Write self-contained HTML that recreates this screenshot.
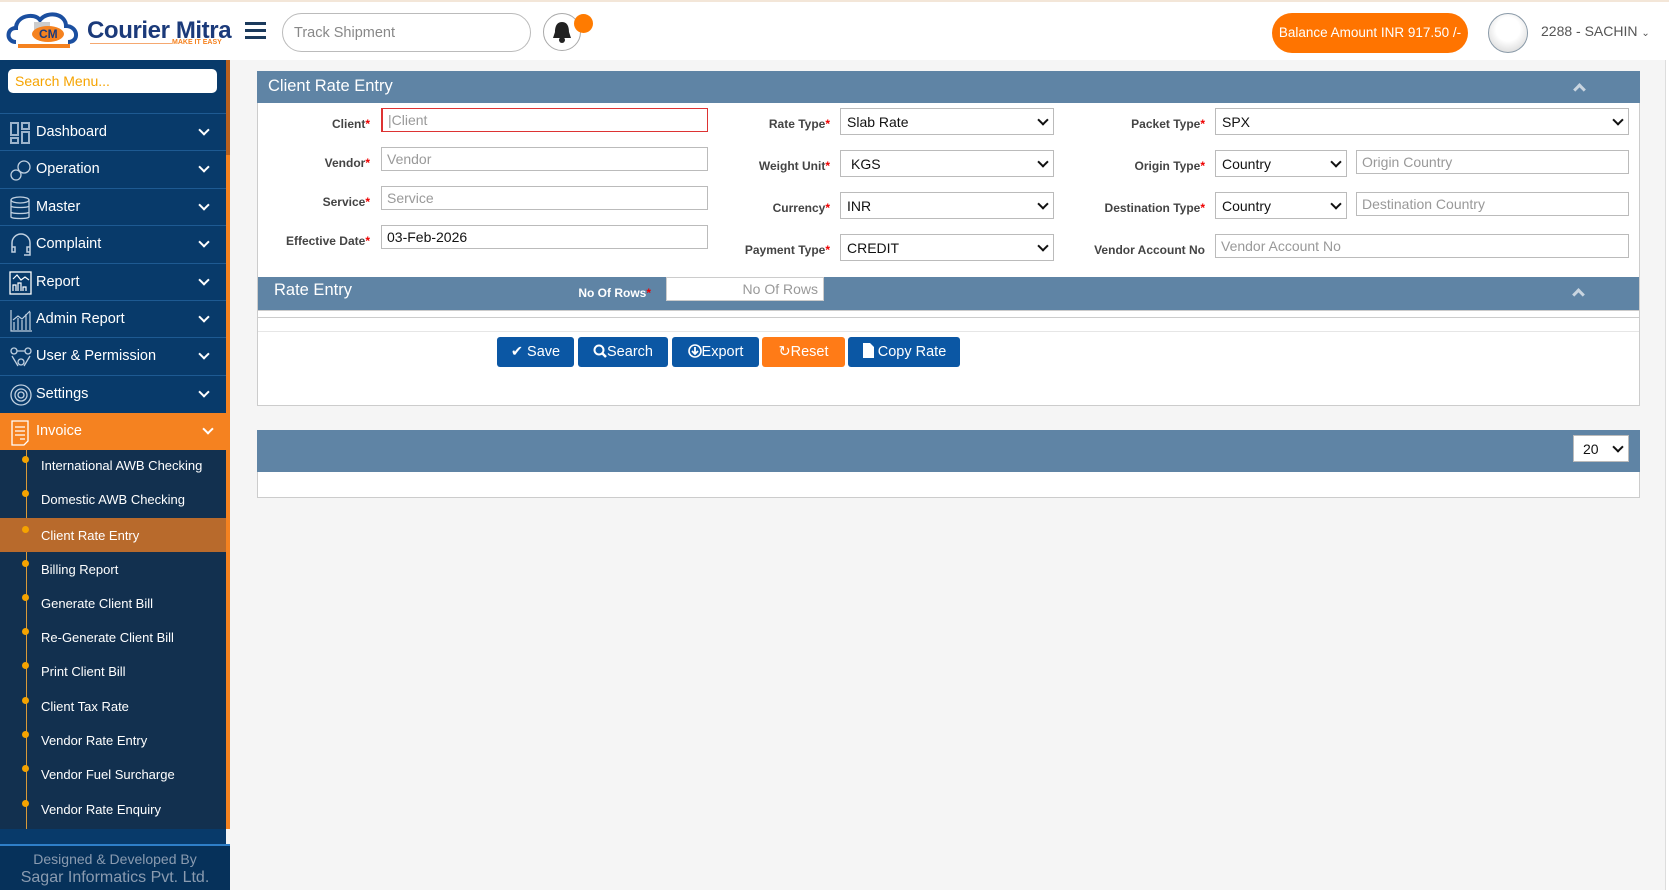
<!DOCTYPE html>
<html><head><meta charset="utf-8"><style>
*{box-sizing:border-box;margin:0;padding:0}
body{width:1669px;height:890px;overflow:hidden;background:#f5f5f5;font-family:"Liberation Sans",Arial,sans-serif;position:relative}
.a{position:absolute}
#hdr{left:0;top:0;width:1669px;height:60px;background:#fff;border-top:2px solid #f3e6d8}
#sb{left:0;top:60px;width:226px;height:830px;background:#083a6a}
.mi{position:absolute;left:0;width:226px;height:37px;border-top:1px solid #1e5a92;color:#fff;font-size:14.5px}
.mi span{position:absolute;left:36px;top:10px}
.mi i{position:absolute;right:18px;top:12px;width:8px;height:8px;border-right:2.5px solid #fff;border-bottom:2.5px solid #fff;transform:rotate(45deg)}
.mi svg{position:absolute;left:9px;top:7px}
.si{position:absolute;left:0;width:226px;height:34px;color:#fff;font-size:13px}
.si span{position:absolute;left:41px;top:10px}
.si b{position:absolute;left:22px;top:8px;width:7px;height:7px;border-radius:50%;background:#f5a300}
.lbl{position:absolute;font-size:12px;font-weight:bold;color:#444;text-align:right}
.lbl em{color:#e00;font-style:normal}
.in{position:absolute;height:24px;border:1px solid #bbb;background:#fff;font-size:14px;color:#999;padding:3px 5px;white-space:nowrap;overflow:hidden}
.sel{position:absolute;height:27px;border:1px solid #bbb;background:#fff;font-size:14px;color:#111;padding:5px 6px}
.sel:after{content:"";position:absolute;right:6px;top:7px;width:6px;height:6px;border-right:2px solid #111;border-bottom:2px solid #111;transform:rotate(45deg)}
.btn{position:absolute;top:337px;height:30px;border-radius:3px;background:#0b57a4;color:#fff;font-size:14.5px;text-align:center;line-height:30px}
.chev{position:absolute;width:9px;height:9px;border-left:3px solid #c9d5e0;border-top:3px solid #c9d5e0;transform:rotate(45deg)}
</style></head><body>
<div id="hdr" class="a">
 <svg class="a" style="left:4px;top:6px" width="84" height="46" viewBox="0 0 84 46"><path d="M12 34 C2 34 2 20 12 20 C12 8 30 4 36 12 C44 2 62 6 62 18 C74 18 76 34 64 34" fill="none" stroke="#1b4fa0" stroke-width="4"/><path d="M14 38 L66 38" stroke="#f5821f" stroke-width="4"/><rect x="30" y="14" width="16" height="14" fill="#ccc"/><ellipse cx="44" cy="26" rx="16" ry="8" fill="#f5821f"/><text x="35" y="30" font-family="Liberation Sans" font-weight="bold" font-size="12" fill="#1b3a7a">CM</text></svg>
 <div class="a" style="left:87px;top:15px;font-size:24px;font-weight:bold;color:#1b3a7a;letter-spacing:-0.4px">Courier Mitra</div>
 <div class="a" style="left:90px;top:41px;width:82px;height:1px;background:#f5a870"></div>
 <div class="a" style="left:172px;top:37px;font-size:7px;font-weight:bold;color:#f5821f">MAKE IT EASY</div>
 <div class="a" style="left:245px;top:20px;width:21px;height:3px;background:#1b3a5c;box-shadow:0 7px 0 #1b3a5c,0 14px 0 #1b3a5c"></div>
 <div class="a" style="left:282px;top:11px;width:249px;height:39px;border:1px solid #bbb;border-radius:20px;font-size:14.5px;color:#888;padding:11px 11px">Track Shipment</div>
 <div class="a" style="left:543px;top:11px;width:38px;height:38px;border:1px solid #aaa;border-radius:50%"></div>
 <svg class="a" style="left:551px;top:18px" width="22" height="24" viewBox="0 0 22 24"><path d="M11 2 C5 2 4 8 4 12 L2 18 L20 18 L18 12 C18 8 17 2 11 2Z" fill="#222"/><circle cx="11" cy="20" r="3" fill="#222"/></svg>
 <div class="a" style="left:574px;top:12px;width:19px;height:19px;border-radius:50%;background:#ff7b00"></div>
 <div class="a" style="left:1272px;top:11px;width:196px;height:40px;border-radius:20px;background:#ff7400;color:#fff;font-size:13.5px;text-align:center;line-height:40px">Balance Amount INR 917.50 /-</div>
 <div class="a" style="left:1488px;top:11px;width:40px;height:40px;border-radius:50%;border:1px solid #8a9aa8;background:radial-gradient(circle at 50% 40%,#fff 40%,#ddd 80%)"></div>
 <div class="a" style="left:1541px;top:21px;font-size:14px;color:#555">2288 - SACHIN <span style="font-size:10px">&#8964;</span></div>
</div>
<div class="a" style="left:1665px;top:60px;width:1px;height:830px;background:#ddd"></div>
<div class="a" style="left:1666px;top:60px;width:3px;height:830px;background:#fff"></div>

<div id="sb" class="a">
 <div class="a" style="left:8px;top:9px;width:209px;height:24px;background:#fff;border-radius:5px;font-size:14px;color:#f5a300;padding:4px 7px">Search Menu...</div>
 <div class="mi" style="top:53px"><svg width="22" height="24"><g fill="none" stroke="#9db4cc" stroke-width="2"><rect x="2" y="2" width="7" height="12"/><rect x="13" y="2" width="7" height="6"/><rect x="2" y="17" width="7" height="5"/><rect x="13" y="11" width="7" height="11"/></g></svg><span>Dashboard</span><i></i></div>
 <div class="mi" style="top:90px"><svg width="24" height="24"><g fill="none" stroke="#c0d0e0" stroke-width="1.3"><circle cx="15" cy="9" r="6"/><circle cx="7" cy="17" r="5"/></g></svg><span>Operation</span><i></i></div>
 <div class="mi" style="top:128px"><svg width="22" height="24"><g fill="none" stroke="#c0d0e0" stroke-width="1.3"><ellipse cx="11" cy="4" rx="9" ry="3"/><path d="M2 4v17c0 2 18 2 18 0V4M2 10c0 2 18 2 18 0M2 16c0 2 18 2 18 0"/></g></svg><span>Master</span><i></i></div>
 <div class="mi" style="top:165px"><svg width="24" height="24"><path d="M3 16V10a9 9 0 0 1 18 0v6M3 14h3v5H3zM18 14h3v5h-3zM21 19v3h-6" fill="none" stroke="#c0d0e0" stroke-width="1.5"/></svg><span>Complaint</span><i></i></div>
 <div class="mi" style="top:203px"><svg width="24" height="24"><rect x="1" y="1" width="21" height="22" fill="none" stroke="#fff" stroke-width="1.3"/><path d="M4 8l4-4 4 5 4-3 4 3M4 20v-6h3v6M9 20v-8h3v8M14 20v-4h3v4" fill="none" stroke="#fff" stroke-width="1.2"/></svg><span>Report</span><i></i></div>
 <div class="mi" style="top:240px"><svg width="24" height="24"><path d="M2 2v21h21M5 22V14M9 22V10M13 22V12M17 22V6M21 22V4M4 12l5-4 4 3 8-8" fill="none" stroke="#c0d0e0" stroke-width="1.2"/></svg><span>Admin Report</span><i></i></div>
 <div class="mi" style="top:277px"><svg width="24" height="24"><g fill="none" stroke="#c0d0e0" stroke-width="1.3"><circle cx="5" cy="6" r="3"/><circle cx="19" cy="6" r="3"/><circle cx="12" cy="17" r="3"/><path d="M8 6h8M3 11l6 10M21 11l-6 10"/></g></svg><span>User &amp; Permission</span><i></i></div>
 <div class="mi" style="top:315px"><svg width="24" height="24"><g fill="none" stroke="#c0d0e0" stroke-width="1.3"><circle cx="12" cy="12" r="10"/><circle cx="12" cy="12" r="6"/><circle cx="12" cy="12" r="3"/></g></svg><span>Settings</span><i></i></div>
 <div class="mi" style="top:353px;height:37px;background:#f58220;border-top:none"><svg width="22" height="26"><path d="M3 1h16v20l-4 4H3z M6 7h10M6 11h10M6 15h10M11 19h5" fill="none" stroke="#fff" stroke-width="1.3"/></svg><span>Invoice</span><i style="right:14px"></i></div>
 <div class="a" style="left:0;top:390px;width:226px;height:379px;background:#12304f"></div>
 <div class="a" style="left:26px;top:390px;width:1px;height:379px;background:#d89a3a"></div>
 <div class="a" style="left:226px;top:0;width:4px;height:769px;background:#f58220"></div>
 <div class="a" style="left:226px;top:0;width:4px;height:95px;background:#b8601f"></div>
 <div class="si" style="top:388px"><b></b><span>International AWB Checking</span></div>
 <div class="si" style="top:422px"><b></b><span>Domestic AWB Checking</span></div>
 <div class="si" style="top:458px;background:#b86a2c"><b></b><span>Client Rate Entry</span></div>
 <div class="si" style="top:492px"><b></b><span>Billing Report</span></div>
 <div class="si" style="top:526px"><b></b><span>Generate Client Bill</span></div>
 <div class="si" style="top:560px"><b></b><span>Re-Generate Client Bill</span></div>
 <div class="si" style="top:594px"><b></b><span>Print Client Bill</span></div>
 <div class="si" style="top:629px"><b></b><span>Client Tax Rate</span></div>
 <div class="si" style="top:663px"><b></b><span>Vendor Rate Entry</span></div>
 <div class="si" style="top:697px"><b></b><span>Vendor Fuel Surcharge</span></div>
 <div class="si" style="top:732px"><b></b><span>Vendor Rate Enquiry</span></div>
 <div class="a" style="left:0;top:784px;width:230px;height:2px;background:#2f7fc8"></div>
 <div class="a" style="left:0;top:786px;width:230px;height:44px;background:#06315a;color:#8a9bb0;text-align:center">
  <div style="font-size:14px;margin-top:5px">Designed &amp; Developed By</div>
  <div style="font-size:16px;margin-top:2px">Sagar Informatics Pvt. Ltd.</div></div>
</div>

<!-- panel 1 -->
<div class="a" style="left:257px;top:71px;width:1383px;height:335px;background:#fff;border:1px solid #ccc"></div>
<div class="a" style="left:257px;top:71px;width:1383px;height:32px;background:#5f84a5;color:#fff;font-size:16.5px;padding:6px 11px">Client Rate Entry</div>
<div class="chev" style="left:1575px;top:85px"></div>

<div class="lbl" style="left:260px;width:110px;top:117px">Client<em>*</em></div>
<div class="in" style="left:381px;top:108px;width:327px;border-color:#d33;border-left:2px solid #d33">|Client</div>
<div class="lbl" style="left:260px;width:110px;top:156px">Vendor<em>*</em></div>
<div class="in" style="left:381px;top:147px;width:327px">Vendor</div>
<div class="lbl" style="left:260px;width:110px;top:195px">Service<em>*</em></div>
<div class="in" style="left:381px;top:186px;width:327px">Service</div>
<div class="lbl" style="left:260px;width:110px;top:234px">Effective Date<em>*</em></div>
<div class="in" style="left:381px;top:225px;width:327px;color:#111">03-Feb-2026</div>

<div class="lbl" style="left:700px;width:130px;top:117px">Rate Type<em>*</em></div>
<div class="sel" style="left:840px;top:108px;width:214px">Slab Rate</div>
<div class="lbl" style="left:700px;width:130px;top:159px">Weight Unit<em>*</em></div>
<div class="sel" style="left:840px;top:150px;width:214px;padding-left:10px">KGS</div>
<div class="lbl" style="left:700px;width:130px;top:201px">Currency<em>*</em></div>
<div class="sel" style="left:840px;top:192px;width:214px">INR</div>
<div class="lbl" style="left:700px;width:130px;top:243px">Payment Type<em>*</em></div>
<div class="sel" style="left:840px;top:234px;width:214px">CREDIT</div>

<div class="lbl" style="left:1040px;width:165px;top:117px">Packet Type<em>*</em></div>
<div class="sel" style="left:1215px;top:108px;width:414px">SPX</div>
<div class="lbl" style="left:1040px;width:165px;top:159px">Origin Type<em>*</em></div>
<div class="sel" style="left:1215px;top:150px;width:132px">Country</div>
<div class="in" style="left:1356px;top:150px;width:273px">Origin Country</div>
<div class="lbl" style="left:1040px;width:165px;top:201px">Destination Type<em>*</em></div>
<div class="sel" style="left:1215px;top:192px;width:132px">Country</div>
<div class="in" style="left:1356px;top:192px;width:273px">Destination Country</div>
<div class="lbl" style="left:1040px;width:165px;top:243px">Vendor Account No</div>
<div class="in" style="left:1215px;top:234px;width:414px">Vendor Account No</div>

<div class="a" style="left:258px;top:277px;width:1381px;height:34px;background:#5f84a5;border-bottom:1px solid #ccc"></div>
<div class="a" style="left:274px;top:281px;color:#fff;font-size:16.5px">Rate Entry</div>
<div class="a" style="left:560px;top:286px;color:#fff;font-size:12px;font-weight:bold;width:91px;text-align:right">No Of Rows<span style="color:#e00">*</span></div>
<div class="in" style="left:666px;top:277px;width:158px;text-align:right;border-color:#ccc">No Of Rows</div>
<div class="chev" style="left:1574px;top:290px"></div>
<div class="a" style="left:258px;top:317px;width:1381px;height:1px;background:#ccc"></div>
<div class="a" style="left:258px;top:331px;width:1381px;height:1px;background:#e6e6e6"></div>

<div class="btn" style="left:497px;width:77px">&#x2714;&#xFE0E; Save</div>
<div class="btn" style="left:578px;width:90px"><svg width="14" height="14" style="vertical-align:-2px"><circle cx="6" cy="6" r="4.5" fill="none" stroke="#fff" stroke-width="2"/><path d="M9 9l4 4" stroke="#fff" stroke-width="2.5"/></svg>Search</div>
<div class="btn" style="left:672px;width:87px"><svg width="14" height="14" style="vertical-align:-2px"><circle cx="7" cy="7" r="6" fill="none" stroke="#fff" stroke-width="1.6"/><path d="M7 3v7M4 7l3 3 3-3" stroke="#fff" stroke-width="1.8" fill="none"/></svg>Export</div>
<div class="btn" style="left:762px;width:83px;background:#ff7b17">&#x21BB;Reset</div>
<div class="btn" style="left:848px;width:112px"><svg width="12" height="15" style="vertical-align:-2px"><path d="M1 0h7l4 4v11H1z" fill="#fff"/></svg> Copy Rate</div>

<!-- panel 2 -->
<div class="a" style="left:257px;top:430px;width:1383px;height:68px;background:#fff;border:1px solid #ccc"></div>
<div class="a" style="left:257px;top:430px;width:1383px;height:42px;background:#5f84a5"></div>
<div class="sel" style="left:1573px;top:435px;width:56px;padding-left:9px">20</div>
</body></html>
